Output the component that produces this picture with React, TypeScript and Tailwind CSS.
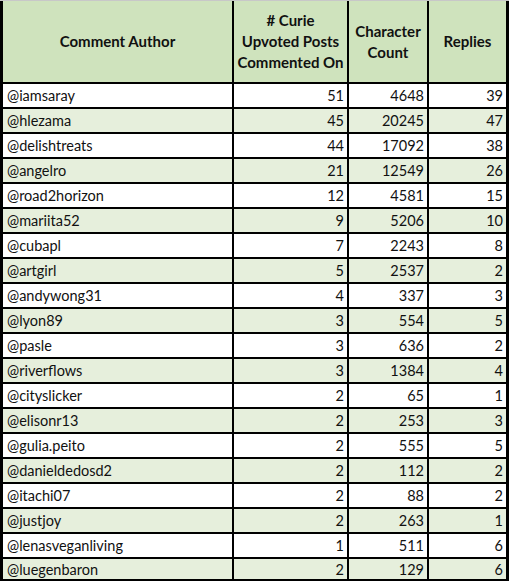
import React from 'react';

const rows: [string, number, number, number][] = [
  ['@iamsaray', 51, 4648, 39],
  ['@hlezama', 45, 20245, 47],
  ['@delishtreats', 44, 17092, 38],
  ['@angelro', 21, 12549, 26],
  ['@road2horizon', 12, 4581, 15],
  ['@mariita52', 9, 5206, 10],
  ['@cubapl', 7, 2243, 8],
  ['@artgirl', 5, 2537, 2],
  ['@andywong31', 4, 337, 3],
  ['@lyon89', 3, 554, 5],
  ['@pasle', 3, 636, 2],
  ['@riverflows', 3, 1384, 4],
  ['@cityslicker', 2, 65, 1],
  ['@elisonr13', 2, 253, 3],
  ['@gulia.peito', 2, 555, 5],
  ['@danieldedosd2', 2, 112, 2],
  ['@itachi07', 2, 88, 2],
  ['@justjoy', 2, 263, 1],
  ['@lenasveganliving', 1, 511, 6],
  ['@luegenbaron', 2, 129, 6],
];

const cols = 'grid grid-cols-[231px_115px_80px_77px]';

export default function App() {
  return (
    <div className="w-[509px] h-[581px] overflow-hidden bg-white border-t border-[#c8c8c8] font-['Lato','Liberation_Sans',sans-serif] text-[14.5px] text-[#111]">
      <div className="border-l-[3px] border-r-[3px] border-b-2 border-black">
        {/* header */}
        <div className={`${cols} h-[83px] bg-[#cfe3bd] border-b-2 border-black font-bold text-[15px] leading-[21px]`}>
          <div className="border-r-2 border-black flex items-center justify-center">Comment Author</div>
          <div className="border-r-2 border-black flex items-center justify-center text-center">
            # Curie<br />Upvoted Posts<br />Commented On
          </div>
          <div className="border-r-2 border-black flex items-center justify-center text-center">
            Character<br />Count
          </div>
          <div className="flex items-center justify-center">Replies</div>
        </div>

        {/* data rows */}
        {rows.map(([name, posts, chars, replies], i) => {
          const last = i === rows.length - 1;
          return (
            <div
              key={name}
              className={`${cols} ${last ? 'h-[20px]' : 'h-[25px] border-b-2 border-black'} ${i % 2 === 1 ? 'bg-[#e6efdc]' : 'bg-white'}`}
            >
              <div className="border-r-2 border-black flex items-center pl-[4px]">{name}</div>
              <div className="border-r-2 border-black flex items-center justify-end pr-[3px]">{posts}</div>
              <div className="border-r-2 border-black flex items-center justify-end pr-[3px]">{chars}</div>
              <div className="flex items-center justify-end pr-[3px]">{replies}</div>
            </div>
          );
        })}
      </div>
    </div>
  );
}
